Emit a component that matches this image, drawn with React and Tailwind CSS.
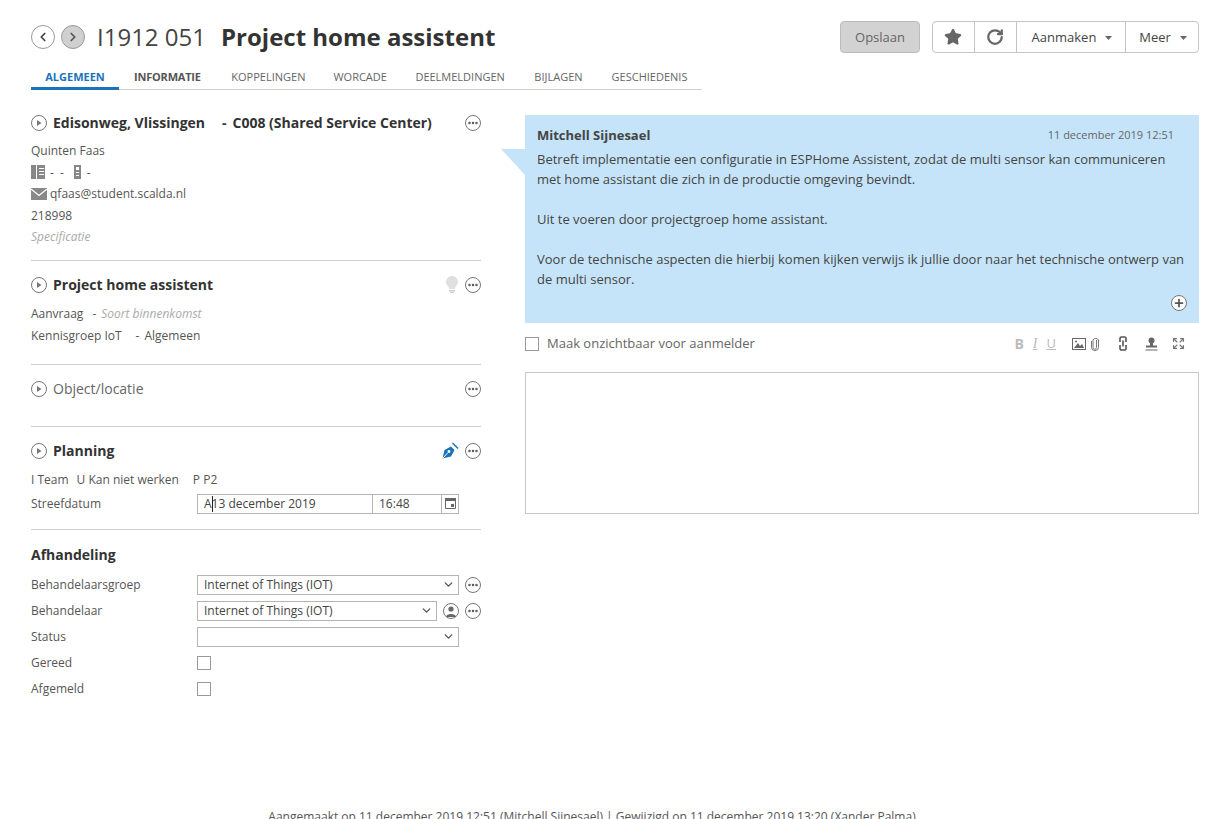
import React from 'react';
import { ChevronLeft, ChevronRight, ChevronDown, Star, RotateCw, Ellipsis, Plus, Expand } from 'lucide-react';

function RoundBtn({ children, className = '' }) {
  return (
    <span className={`flex h-4 w-4 shrink-0 items-center justify-center rounded-full border border-[#777] bg-white text-[#555] ${className}`}>
      {children}
    </span>
  );
}

function Dots() {
  return (
    <RoundBtn>
      <Ellipsis className="h-3 w-3" strokeWidth={3} />
    </RoundBtn>
  );
}

function Play() {
  return (
    <RoundBtn>
      <svg width="6" height="6" viewBox="0 0 6 6"><path d="M1 0 L5.5 3 L1 6 Z" fill="#777" /></svg>
    </RoundBtn>
  );
}

function Caret() {
  return <svg width="7" height="4" viewBox="0 0 7 4"><path d="M0 0 H7 L3.5 4 Z" fill="#666" /></svg>;
}

function SectionHead({ title, bold = true, lift = '', children }) {
  return (
    <div className="flex h-5 items-center">
      <Play />
      <span className={`ml-[6px] text-[14px] ${lift} ${bold ? 'font-bold text-[#333]' : 'text-[#666]'}`}>{title}</span>
      <div className="ml-auto flex items-center gap-[6px]">{children}<Dots /></div>
    </div>
  );
}

function SelectBox({ value, className = 'w-[262px]' }) {
  return (
    <div className={`flex h-5 shrink-0 items-center justify-between border border-[#b5b5b5] pl-[6px] pr-[3px] text-[12px] text-[#444] ${className}`}>
      <span>{value}</span>
      <ChevronDown className="h-[13px] w-[13px] text-[#555]" strokeWidth={2.5} />
    </div>
  );
}

function FormRow({ label, children }) {
  return (
    <div className="flex h-[26px] items-center">
      <span className="w-[166px] shrink-0 text-[12px] text-[#555]">{label}</span>
      {children}
    </div>
  );
}

function Divider() {
  return <div className="h-px bg-[#d0d0d0]" />;
}

const tabs = [
  { label: 'KOPPELINGEN', gap: 'ml-[30.5px]' },
  { label: 'WORCADE', gap: 'ml-[28px]' },
  { label: 'DEELMELDINGEN', gap: 'ml-[28.5px]' },
  { label: 'BIJLAGEN', gap: 'ml-[29.5px]' },
  { label: 'GESCHIEDENIS', gap: 'ml-[29px]' },
];

export default function App() {
  return (
    <div className="relative h-[819px] w-[1231px] overflow-hidden bg-white pl-[31px] pr-[32px] pt-5 font-['Open_Sans',sans-serif] text-[12px] text-[#555]">
      {/* Header */}
      <div className="flex h-[34px] items-center">
        <span className="flex h-6 w-6 items-center justify-center rounded-full border-[1.5px] border-[#999] bg-white text-[#444]">
          <ChevronLeft className="h-3.5 w-3.5" strokeWidth={3} />
        </span>
        <span className="ml-[6px] flex h-6 w-6 items-center justify-center rounded-full border-[1.5px] border-[#999] bg-[#d0d0d0] text-[#555]">
          <ChevronRight className="h-3.5 w-3.5" strokeWidth={3} />
        </span>
        <span className="ml-3 text-[24px] text-[#444]">I1912 051</span>
        <span className="ml-[15px] text-[24px] font-bold text-[#333]">Project home assistent</span>
        <div className="ml-auto flex h-8 items-stretch">
          <button className="w-20 rounded-[4px] border border-[#bbb] bg-[#d2d2d2] pt-[1px] text-[13px] text-[#666]">Opslaan</button>
          <div className="ml-3 flex rounded-[4px] border border-[#c4c4c4] text-[13px] text-[#444]">
            <span className="flex w-[42px] items-center justify-center border-r border-[#c4c4c4] pr-[1px]">
              <Star className="h-[18px] w-[18px] fill-[#666] text-[#666]" />
            </span>
            <span className="flex w-[42px] items-center justify-center border-r border-[#c4c4c4] pr-[1px]">
              <RotateCw className="h-[18px] w-[18px] text-[#666]" strokeWidth={3} />
            </span>
            <span className="flex w-[109px] items-center justify-center gap-[9px] border-r border-[#c4c4c4] pl-[2px] pt-[1px]">Aanmaken <Caret /></span>
            <span className="flex w-[72px] items-center justify-center gap-[9px] pl-[2px] pt-[1px]">Meer <Caret /></span>
          </div>
        </div>
      </div>

      {/* Tabs */}
      <div className="mt-[13px] flex h-[23px] w-[671px] items-start border-b border-[#d0d0d0] text-[11px]">
        <span className="flex h-[23px] w-[88px] items-center justify-center border-b-[3px] border-[#1a73ba] pt-[1px] font-bold text-[#1a73ba]">ALGEMEEN</span>
        <span className="ml-[15px] flex h-5 items-center font-bold tracking-[-0.2px] text-[#555]">INFORMATIE</span>
        {tabs.map((t) => (
          <span key={t.label} className={`flex h-5 items-center text-[#666] ${t.gap}`}>{t.label}</span>
        ))}
      </div>

      {/* Body */}
      <div className="mt-[23px] flex items-start">
        <div className="w-[450px]">
          <SectionHead lift="mb-px" title={<>Edisonweg, Vlissingen<span className="ml-[17px]">-</span><span className="ml-[6px]">C008 (Shared Service Center)</span></>} />
          <div className="mt-[7px] flex flex-col text-[12px] leading-[21.6px]">
            <span>Quinten Faas</span>
            <span className="flex items-center">
              <svg width="16" height="14" viewBox="0 0 16 14" fill="#888"><rect x="0" y="0" width="5" height="14" /><path d="M6 0 H14 V14 H6 Z M8 3 V4 H13 V3 Z M8 6 V7 H13 V6 Z M8 9 V10 H13 V9 Z" fillRule="evenodd" /></svg>
              <span className="ml-[3px]">-</span>
              <span className="ml-[6px]">-</span>
              <svg className="ml-[9px]" width="10" height="14" viewBox="0 0 10 14" fill="#888"><path d="M1 0 H8 V14 H1 Z M3 2 V5 H6 V2 Z M3 7 V8 H6 V7 Z M3 10 V11 H6 V10 Z" fillRule="evenodd" /></svg>
              <span className="ml-[4px]">-</span>
            </span>
            <span className="flex items-center gap-[3px]">
              <svg width="16" height="12" viewBox="0 0 16 12"><rect width="16" height="12" fill="#888" /><path d="M0 1 L8 7.5 L16 1" fill="none" stroke="#fff" strokeWidth="1.2" /></svg>
              qfaas@student.scalda.nl
            </span>
            <span>218998</span>
            <span className="italic text-[#aaa]">Specificatie</span>
          </div>
          <div className="mt-3"><Divider /></div>

          <div className="mt-[14px]">
            <SectionHead title="Project home assistent">
              <svg width="14" height="17" viewBox="0 0 14 17" fill="#e0e0e0"><path d="M7 0 C3 0 1 3 1 6 C1 9 4 10 4 13 H10 C10 10 13 9 13 6 C13 3 11 0 7 0 Z" /><rect x="4" y="14" width="6" height="1.5" fill="#ccc" /><rect x="5" y="16" width="4" height="1" fill="#ccc" /></svg>
            </SectionHead>
            <div className="mt-2 flex flex-col leading-[21px]">
              <span>Aanvraag<span className="ml-[9px]">-</span><span className="ml-[5px] italic text-[#aaa]">Soort binnenkomst</span></span>
              <span className="mt-px">Kennisgroep IoT<span className="ml-[14px]">-</span><span className="ml-[5px]">Algemeen</span></span>
            </div>
          </div>
          <div className="mt-[18px]"><Divider /></div>

          <div className="mt-[14px]">
            <SectionHead title="Object/locatie" bold={false} />
          </div>
          <div className="mt-[27px]"><Divider /></div>

          <div className="mt-[14px]">
            <SectionHead title="Planning">
              <svg width="17" height="17" viewBox="0 0 17 17" fill="#1a73ba"><path d="M0.5 16.5 L2.5 8 L9 4.5 L12.5 8 L9 14.5 Z" /><path d="M11 0.5 L16.5 6 L15.5 7 L10 1.5 Z" /><path d="M1 16 L6 10.5" stroke="#fff" strokeWidth="1" /><circle cx="7" cy="9.5" r="1.4" fill="#fff" /></svg>
            </SectionHead>
            <div className="mt-[9px] flex h-5 items-center">
              <span>I Team</span>
              <span className="ml-[8px]">U Kan niet werken</span>
              <span className="ml-[14px]">P P2</span>
            </div>
            <div className="mt-[4px] flex h-5 items-center">
              <span className="w-[166px] shrink-0">Streefdatum</span>
              <div className="flex h-5 w-[262px] shrink-0 items-stretch border border-[#b5b5b5] text-[12px] text-[#444]">
                <span className="relative flex w-[175px] items-center border-r border-[#b5b5b5] pl-[6px]">
                  A13 december 2019
                  <span className="absolute left-[14px] top-[1px] h-4 w-px bg-[#222]" />
                </span>
                <span className="flex w-[69px] items-center border-r border-[#b5b5b5] pl-[6px]">16:48</span>
                <span className="flex flex-1 items-center justify-center">
                  <svg width="11" height="11" viewBox="0 0 11 11"><path d="M0.5 0.5 H10.5 V10.5 H0.5 Z" fill="none" stroke="#666" /><rect x="0" y="0" width="11" height="3" fill="#666" /><rect x="6" y="6" width="3" height="3" fill="#666" /></svg>
                </span>
              </div>
            </div>
          </div>
          <div className="mt-[15px]"><Divider /></div>

          <div className="mt-[15px] flex h-5 items-center text-[14px] font-bold text-[#333]">Afhandeling</div>
          <div className="mt-[7px]">
            <FormRow label="Behandelaarsgroep">
              <SelectBox value="Internet of Things (IOT)" />
              <span className="ml-[6px]"><Dots /></span>
            </FormRow>
            <FormRow label="Behandelaar">
              <SelectBox value="Internet of Things (IOT)" className="w-[240px]" />
              <span className="ml-[6px]">
                <RoundBtn>
                  <svg width="12" height="12" viewBox="0 0 12 12" fill="#666"><circle cx="6" cy="4" r="2.6" /><path d="M1 12 C1 8 11 8 11 12 Z" /></svg>
                </RoundBtn>
              </span>
              <span className="ml-[6px]"><Dots /></span>
            </FormRow>
            <FormRow label="Status"><SelectBox value="" /></FormRow>
            <FormRow label="Gereed"><span className="h-[14px] w-[14px] border border-[#999]" /></FormRow>
            <FormRow label="Afgemeld"><span className="h-[14px] w-[14px] border border-[#999]" /></FormRow>
          </div>
        </div>

        {/* Right column */}
        <div className="ml-[44px] mt-[2px] w-[674px]">
          <div className="relative h-[208px] bg-[#c5e4fa] px-3 pt-[10px] text-[13px] leading-5 text-[#444]">
            <span className="absolute -left-6 top-[34px] h-[26px] w-6 bg-[#c5e4fa] [clip-path:polygon(0_0,100%_0,100%_100%)]" />
            <div className="flex items-center justify-between pr-[13px]">
              <span className="font-bold text-[#444]">Mitchell Sijnesael</span>
              <span className="text-[11px] text-[#666]">11 december 2019 12:51</span>
            </div>
            <p className="mt-[4px]">Betreft implementatie een configuratie in ESPHome Assistent, zodat de multi sensor kan communiceren met home assistant die zich in de productie omgeving bevindt.</p>
            <p className="mt-5">Uit te voeren door projectgroep home assistant.</p>
            <p className="mt-5">Voor de technische aspecten die hierbij komen kijken verwijs ik jullie door naar het technische ontwerp van de multi sensor.</p>
            <span className="absolute bottom-[12px] right-[12px]">
              <RoundBtn><Plus className="h-3 w-3" strokeWidth={3.5} /></RoundBtn>
            </span>
          </div>
          <div className="flex h-[41px] items-center text-[13px] text-[#666]">
            <span className="h-[14px] w-[14px] border border-[#999]" />
            <span className="ml-2">Maak onzichtbaar voor aanmelder</span>
            <div className="ml-auto mr-[14px] flex items-center text-[#bbb]">
              <span className="text-[14px] font-bold">B</span>
              <span className="ml-[9px] font-['Liberation_Serif',serif] text-[14px] italic underline">I</span>
              <span className="ml-[9px] text-[13px] underline">U</span>
              <svg className="ml-[16px]" width="14" height="12" viewBox="0 0 14 12"><rect x="0.5" y="0.5" width="13" height="11" fill="none" stroke="#666" /><path d="M2 10 L6 5 L8 8 L10 6 L12 10 Z" fill="#666" /><circle cx="4" cy="3.5" r="1" fill="#666" /></svg>
              <svg className="ml-[5px]" width="8" height="14" viewBox="0 0 8 14" fill="none" stroke="#777"><path d="M5.5 3 V10.5 A1.75 1.75 0 0 1 2 10.5 V3 A3 2.5 0 0 1 7.5 3 V10.5 A3.5 3 0 0 1 0.5 10.5 V4" /></svg>
              <svg className="ml-[20px]" width="8" height="15" viewBox="0 0 8 15" fill="none" stroke="#555" strokeWidth="1.6"><path d="M1 6 V2.5 A1.5 1.5 0 0 1 2.5 1 H5.5 A1.5 1.5 0 0 1 7 2.5 V6" /><path d="M1 9 V12.5 A1.5 1.5 0 0 0 2.5 14 H5.5 A1.5 1.5 0 0 0 7 12.5 V9" /><path d="M4 4.5 V10.5" /></svg>
              <svg className="ml-[18px]" width="13" height="14" viewBox="0 0 13 14" fill="#666"><circle cx="6.5" cy="3.5" r="3" /><rect x="5" y="5.5" width="3" height="3.5" /><rect x="1" y="8.5" width="11" height="2" /><rect x="0.5" y="12.5" width="12" height="1" /></svg>
              <Expand className="ml-[14px] h-[13px] w-[13px] text-[#777]" strokeWidth={2.5} />
            </div>
          </div>
          <div className="mt-[8px] h-[142px] border border-[#c8c8c8]" />
        </div>
      </div>

      {/* Footer, cut off by the window */}
      <div className="absolute left-0 right-[47px] top-[808px] text-center text-[12px] text-[#555]">
        Aangemaakt op 11 december 2019 12:51 (Mitchell Sijnesael) | Gewijzigd op 11 december 2019 13:20 (Xander Palma)
      </div>
    </div>
  );
}
